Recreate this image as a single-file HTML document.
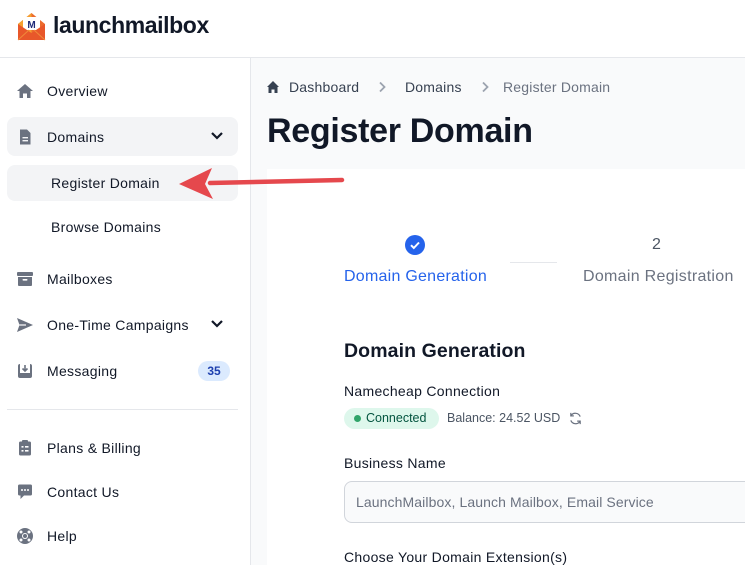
<!DOCTYPE html>
<html><head><meta charset="utf-8"><style>
*{margin:0;padding:0;box-sizing:border-box}
body{width:745px;height:565px;overflow:hidden;background:#fff;font-family:"Liberation Sans",sans-serif;position:relative;color:#111827}
.a{position:absolute}
.nav{position:absolute;left:47px;font-size:14px;color:#111827;letter-spacing:0.3px}
.ic{position:absolute;left:16px;width:18px;height:18px}
</style></head><body>
<svg class="a" style="left:16px;top:12px" width="31" height="30" viewBox="0 0 31 30">
<path d="M2 12 L15.5 1 L29 12 V28 H2 Z" fill="#ec6b2d"/>
<path d="M2 12 L15.5 1 L15.5 28 H2Z" fill="#f5a030"/>
<rect x="7" y="5" width="17" height="13" fill="#fff"/>
<text x="15.5" y="16" font-size="10" font-weight="bold" text-anchor="middle" fill="#1e2a78" font-family="Liberation Sans">M</text>
<path d="M2 12 L15.5 21 L29 12 V28 H2Z" fill="#e8572a"/>
<path d="M2 28 L13 18 M29 28 L18 18" stroke="#f08a3a" stroke-width="1"/>
</svg>
<div class="a" style="left:53px;top:12px;font-size:23px;font-weight:bold;letter-spacing:-0.4px">launchmailbox</div>
<div class="a" style="left:0;top:57px;width:745px;height:1px;background:#e5e7eb"></div>
<div class="a" style="left:250px;top:58px;width:1px;height:507px;background:#e5e7eb"></div>
<div class="a" style="left:251px;top:58px;width:494px;height:507px;background:#f9fafb"></div>
<svg class="ic" style="top:82px" viewBox="0 0 18 18"><path d="M9 2 L1 9 H3.5 V16 H7 V11.5 H11 V16 H14.5 V9 H17 Z" fill="#6b7280"/></svg>
<div class="nav" style="top:83px">Overview</div>
<div class="a" style="left:7px;top:117px;width:231px;height:39px;background:#f3f4f6;border-radius:8px"></div>
<svg class="ic" style="top:128px" viewBox="0 0 18 18"><path d="M4 1.5 H11 L14.5 5 V16.5 H4 Z" fill="#6b7280"/><rect x="6.5" y="9" width="5.5" height="1.4" fill="#f3f4f6"/><rect x="6.5" y="12" width="5.5" height="1.4" fill="#f3f4f6"/></svg>
<div class="nav" style="top:129px">Domains</div>
<svg class="a" style="left:210px;top:131px" width="14" height="10" viewBox="0 0 14 10"><path d="M2 2 L7 7 L12 2" stroke="#111827" stroke-width="2.2" fill="none"/></svg>
<div class="a" style="left:7px;top:165px;width:231px;height:36px;background:#f3f4f6;border-radius:8px"></div>
<div class="nav" style="left:51px;top:175px">Register Domain</div>
<div class="nav" style="left:51px;top:219px">Browse Domains</div>
<svg class="ic" style="top:270px" viewBox="0 0 18 18"><rect x="1" y="2" width="16" height="4" rx="1" fill="#6b7280"/><path d="M2 7 H16 V15 Q16 16 15 16 H3 Q2 16 2 15 Z" fill="#6b7280"/><rect x="6.5" y="9" width="5" height="1.6" rx=".8" fill="#fff"/></svg>
<div class="nav" style="top:271px">Mailboxes</div>
<svg class="ic" style="top:316px" viewBox="0 0 18 18"><path d="M1 2 L17 9 L1 16 L3.5 9 Z" fill="#6b7280"/><path d="M3.5 9 H10" stroke="#fff" stroke-width="1.2"/></svg>
<div class="nav" style="top:317px">One-Time Campaigns</div>
<svg class="a" style="left:210px;top:319px" width="14" height="10" viewBox="0 0 14 10"><path d="M2 2 L7 7 L12 2" stroke="#111827" stroke-width="2.2" fill="none"/></svg>
<svg class="ic" style="top:362px" viewBox="0 0 18 18"><rect x="2" y="2" width="14" height="14" rx="2" fill="#6b7280"/><rect x="4" y="2" width="10" height="9" fill="#fff"/><path d="M9 3 V9 M6.5 6.5 L9 9 L11.5 6.5" stroke="#6b7280" stroke-width="1.6" fill="none"/></svg>
<div class="nav" style="top:363px">Messaging</div>
<div class="a" style="left:198px;top:361px;width:32px;height:20px;border-radius:10px;background:#dbeafe;color:#1e40af;font-size:12px;font-weight:bold;text-align:center;line-height:20px">35</div>
<div class="a" style="left:7px;top:409px;width:231px;height:1px;background:#e5e7eb"></div>
<svg class="ic" style="top:439px" viewBox="0 0 18 18"><rect x="3" y="2.5" width="12" height="14" rx="1.5" fill="#6b7280"/><rect x="6" y="1" width="6" height="3" rx="1" fill="#6b7280"/><g fill="#fff"><rect x="5.5" y="7" width="2" height="1.6"/><rect x="9" y="7" width="3.5" height="1.6"/><rect x="5.5" y="11" width="2" height="1.6"/><rect x="9" y="11" width="3.5" height="1.6"/></g></svg>
<div class="nav" style="top:440px">Plans &amp; Billing</div>
<svg class="ic" style="top:483px" viewBox="0 0 18 18"><path d="M2 3 Q2 1.5 3.5 1.5 H14.5 Q16 1.5 16 3 V11 Q16 12.5 14.5 12.5 H8 L4.5 16 V12.5 H3.5 Q2 12.5 2 11 Z" fill="#6b7280"/><g fill="#fff"><circle cx="6" cy="7" r="1"/><circle cx="9" cy="7" r="1"/><circle cx="12" cy="7" r="1"/></g></svg>
<div class="nav" style="top:484px">Contact Us</div>
<svg class="ic" style="top:527px" viewBox="0 0 18 18"><circle cx="9" cy="9" r="8" fill="#6b7280"/><circle cx="9" cy="9" r="3" fill="#fff"/><circle cx="9" cy="9" r="2" fill="#6b7280"/><g fill="#fff"><circle cx="5" cy="5" r="1.5"/><circle cx="13" cy="5" r="1.5"/><circle cx="5" cy="13" r="1.5"/><circle cx="13" cy="13" r="1.5"/></g></svg>
<div class="nav" style="top:528px">Help</div>
<svg class="a" style="left:266px;top:80px" width="14" height="14" viewBox="0 0 14 14"><path d="M7 1 L1 7 H2.5 V13 H5.5 V9.5 H8.5 V13 H11.5 V7 H13 Z" fill="#374151"/></svg>
<div class="a" style="left:289px;top:79px;font-size:14px;color:#374151;letter-spacing:0.2px">Dashboard</div>
<svg class="a" style="left:377px;top:81px" width="10" height="12" viewBox="0 0 10 12"><path d="M3 1.5 L7.5 6 L3 10.5" stroke="#9ca3af" stroke-width="1.8" fill="none"/></svg>
<div class="a" style="left:405px;top:79px;font-size:14px;color:#374151;letter-spacing:0.2px">Domains</div>
<svg class="a" style="left:480px;top:81px" width="10" height="12" viewBox="0 0 10 12"><path d="M3 1.5 L7.5 6 L3 10.5" stroke="#9ca3af" stroke-width="1.8" fill="none"/></svg>
<div class="a" style="left:503px;top:79px;font-size:14px;color:#6b7280;letter-spacing:0.2px">Register Domain</div>
<div class="a" style="left:267px;top:112px;font-size:34px;font-weight:bold;letter-spacing:-0.3px;color:#111827">Register Domain</div>
<div class="a" style="left:267px;top:169px;width:478px;height:396px;background:#fff"></div>
<svg class="a" style="left:405px;top:235px" width="20" height="20" viewBox="0 0 20 20"><circle cx="10" cy="10" r="10" fill="#2563eb"/><path d="M6 10.2 L8.8 13 L14 7.5" stroke="#fff" stroke-width="2" fill="none"/></svg>
<div class="a" style="left:344px;top:268px;font-size:16px;color:#2563eb;letter-spacing:0.25px">Domain Generation</div>
<div class="a" style="left:510px;top:262px;width:47px;height:1px;background:#e5e7eb"></div>
<div class="a" style="left:652px;top:236px;font-size:16px;color:#4b5563">2</div>
<div class="a" style="left:583px;top:268px;font-size:16px;color:#6b7280;letter-spacing:0.3px">Domain Registration</div>
<div class="a" style="left:344px;top:340px;font-size:19.5px;font-weight:bold;color:#111827;letter-spacing:0.1px">Domain Generation</div>
<div class="a" style="left:344px;top:383px;font-size:14px;color:#111827;letter-spacing:0.3px">Namecheap Connection</div>
<div class="a" style="left:344px;top:408px;width:95px;height:21px;border-radius:11px;background:#def7ec;color:#03543f;font-size:12.5px;line-height:21px;padding-left:22px">Connected</div>
<div class="a" style="left:354px;top:415px;width:7px;height:7px;border-radius:50%;background:#31a46a"></div>
<div class="a" style="left:447px;top:411px;font-size:12.5px;color:#4b5563">Balance: 24.52 USD</div>
<svg class="a" style="left:568px;top:411px" width="15" height="15" viewBox="0 0 16 16"><path d="M13 6 A5.5 5.5 0 0 0 3.2 5 M3 10 A5.5 5.5 0 0 0 12.8 11" stroke="#6b7280" stroke-width="1.3" fill="none"/><path d="M3 2 V5.2 H6.2 M13 14 V10.8 H9.8" stroke="#6b7280" stroke-width="1.3" fill="none"/></svg>
<div class="a" style="left:344px;top:455px;font-size:14px;color:#111827;letter-spacing:0.3px">Business Name</div>
<div class="a" style="left:344px;top:481px;width:420px;height:42px;border:1px solid #d1d5db;border-radius:8px;background:#f9fafb;font-size:14px;color:#6b7280;line-height:40px;padding-left:11px;letter-spacing:0.1px">LaunchMailbox, Launch Mailbox, Email Service</div>
<div class="a" style="left:344px;top:549px;font-size:14px;color:#111827;letter-spacing:0.3px">Choose Your Domain Extension(s)</div>
<svg class="a" style="left:0;top:0" width="745" height="565"><path d="M342 180 L210 183" stroke="#e5484d" stroke-width="4.5" stroke-linecap="round"/><path d="M179 184 L212 168 L205 184 L213 199 Z" fill="#e5484d"/></svg>
</body></html>
